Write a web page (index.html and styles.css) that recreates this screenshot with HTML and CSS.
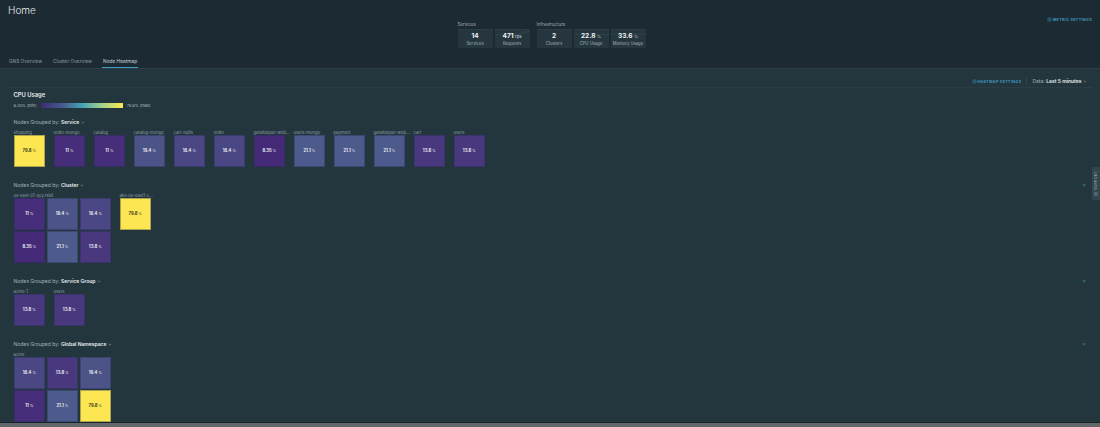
FILE: index.html
```html
<!DOCTYPE html>
<html lang="en">
<head>
    <meta charset="UTF-8">
    <title>Home</title>
    <link rel="stylesheet" href="styles.css">
</head>
<body>
    <header class="top">
        <h1 class="page-title">Home</h1>
        <div class="summary">
            <div class="summary-group">
                <div class="summary-label">Services</div>
                <div class="summary-cards">
                    <div class="stat"><b>14</b><span>Services</span></div>
                    <div class="stat"><svg class="spark" viewBox="0 0 35 19"><path d="M0 6l5-2 5 3 6-3 5 1 6-2 8-2"/></svg><b>471 <i>rps</i></b><span>Requests</span></div>
                </div>
            </div>
            <div class="summary-group">
                <div class="summary-label">Infrastructure</div>
                <div class="summary-cards">
                    <div class="stat"><b>2</b><span>Clusters</span></div>
                    <div class="stat"><svg class="spark" viewBox="0 0 35 19"><path d="M0 5l6-1 5 2 6-3 6 2 6-1 6 1"/></svg><b>22.8 <i>%</i></b><span>CPU Usage</span></div>
                    <div class="stat"><svg class="spark" viewBox="0 0 35 19"><path d="M0 4l8 0 6 1 7-1 7 0 7 0"/></svg><b>33.6 <i>%</i></b><span>Memory Usage</span></div>
                </div>
            </div>
        </div>
        <a class="settings-link metric-link"><svg class="gear" viewBox="0 0 10 10"><circle cx="5" cy="5" r="3.6"/><circle cx="5" cy="5" r="1.2"/></svg>METRIC SETTINGS</a>
    </header>
    <nav class="tabs">
        <a>GNS Overview</a>
        <a>Cluster Overview</a>
        <a class="active">Node Heatmap</a>
    </nav>
    <main class="content">
        <div class="toolbar">
            <a class="settings-link"><svg class="gear" viewBox="0 0 10 10"><circle cx="5" cy="5" r="3.6"/><circle cx="5" cy="5" r="1.2"/></svg>HEATMAP SETTINGS</a>
            <span class="toolbar-sep"></span>
            <span class="data-range">Data: <b>Last 5 minutes</b><svg class="caret" viewBox="0 0 6 4"><path d="M1 1l2 2 2-2"/></svg></span>
        </div>
        <h2 class="metric-title">CPU Usage</h2>
        <div class="legend">
            <span>8.35% (min)</span>
            <span class="legend-bar"></span>
            <span>79.8% (max)</span>
        </div>

        <section class="group group-service">
            <div class="group-title">Nodes Grouped by: <b>Service</b><svg class="caret" viewBox="0 0 6 4"><path d="M1 1l2 2 2-2"/></svg></div>
            <div class="blocks">
                <div class="block"><label>shopping</label><div class="cells one"><div class="cell c798">79.8 <i>%</i></div></div></div>
                <div class="block"><label>order-mongo</label><div class="cells one"><div class="cell c11">11 <i>%</i></div></div></div>
                <div class="block"><label>catalog</label><div class="cells one"><div class="cell c11">11 <i>%</i></div></div></div>
                <div class="block"><label>catalog-mongo</label><div class="cells one"><div class="cell c194">19.4 <i>%</i></div></div></div>
                <div class="block"><label>cart-redis</label><div class="cells one"><div class="cell c164">16.4 <i>%</i></div></div></div>
                <div class="block"><label>order</label><div class="cells one"><div class="cell c164">16.4 <i>%</i></div></div></div>
                <div class="block"><label>gatekeeper-web...</label><div class="cells one"><div class="cell c835">8.35 <i>%</i></div></div></div>
                <div class="block"><label>users-mongo</label><div class="cells one"><div class="cell c211">21.1 <i>%</i></div></div></div>
                <div class="block"><label>payment</label><div class="cells one"><div class="cell c211">21.1 <i>%</i></div></div></div>
                <div class="block"><label>gatekeeper-web...</label><div class="cells one"><div class="cell c211">21.1 <i>%</i></div></div></div>
                <div class="block"><label>cart</label><div class="cells one"><div class="cell c138">13.8 <i>%</i></div></div></div>
                <div class="block"><label>users</label><div class="cells one"><div class="cell c138">13.8 <i>%</i></div></div></div>
            </div>
        </section>

        <section class="group">
            <button class="close">×</button>
            <div class="group-title">Nodes Grouped by: <b>Cluster</b><svg class="caret" viewBox="0 0 6 4"><path d="M1 1l2 2 2-2"/></svg></div>
            <div class="blocks">
                <div class="block wide">
                    <label>us-east-01-qcy.tsbil</label>
                    <div class="cells three">
                        <div class="cell c11">11 <i>%</i></div>
                        <div class="cell c194">19.4 <i>%</i></div>
                        <div class="cell c164">16.4 <i>%</i></div>
                        <div class="cell c835">8.35 <i>%</i></div>
                        <div class="cell c211">21.1 <i>%</i></div>
                        <div class="cell c138">13.8 <i>%</i></div>
                    </div>
                </div>
                <div class="block"><label>aks-us-east1-c...</label><div class="cells one"><div class="cell c798">79.8 <i>%</i></div></div></div>
            </div>
        </section>

        <section class="group">
            <button class="close">×</button>
            <div class="group-title">Nodes Grouped by: <b>Service Group</b><svg class="caret" viewBox="0 0 6 4"><path d="M1 1l2 2 2-2"/></svg></div>
            <div class="blocks">
                <div class="block"><label>acme-1</label><div class="cells one"><div class="cell c138">13.8 <i>%</i></div></div></div>
                <div class="block"><label>users</label><div class="cells one"><div class="cell c138">13.8 <i>%</i></div></div></div>
            </div>
        </section>

        <section class="group">
            <button class="close">×</button>
            <div class="group-title">Nodes Grouped by: <b>Global Namespace</b><svg class="caret" viewBox="0 0 6 4"><path d="M1 1l2 2 2-2"/></svg></div>
            <div class="blocks">
                <div class="block wide">
                    <label>acme</label>
                    <div class="cells three">
                        <div class="cell c164">16.4 <i>%</i></div>
                        <div class="cell c138">13.8 <i>%</i></div>
                        <div class="cell c194">19.4 <i>%</i></div>
                        <div class="cell c11">11 <i>%</i></div>
                        <div class="cell c211">21.1 <i>%</i></div>
                        <div class="cell c798">79.8 <i>%</i></div>
                    </div>
                </div>
            </div>
        </section>
        <div class="support"><span>SUPPORT</span><svg class="support-icon" viewBox="0 0 6 6"><circle cx="3" cy="3" r="2.2"/></svg></div>
    </main>
    <div class="bottom-strip"></div>
</body>
</html>
```

FILE: styles.css
```css
* {
    box-sizing: border-box;
}

body {
    margin: 0;
    height: 427px;
    overflow: hidden;
    background-color: #1c2a33;
    font-family: Inter, "Liberation Sans", sans-serif;
    color: #c5ced3;
    display: flex;
    flex-direction: column;
}

/* Header */
.top {
    position: relative;
    height: 54px;
    flex: none;
    padding: 4px 5px 0 8px;
}

.page-title {
    margin: 0;
    font-size: 10px;
    font-weight: 300;
    line-height: 13px;
    color: #e6ecef;
}

.summary {
    display: flex;
    justify-content: center;
    gap: 7px;
    margin-top: 5px;
}

.summary-label {
    font-size: 4.5px;
    line-height: 6px;
    color: #a3b0b7;
    margin-bottom: 1px;
}

.summary-cards {
    display: flex;
    gap: 2px;
}

.stat {
    position: relative;
    width: 35px;
    height: 19px;
    background-color: #25363f;
    border-top: 1px solid #2b3e47;
    text-align: center;
    display: flex;
    flex-direction: column;
    align-items: center;
    padding-top: 2px;
}

.spark {
    position: absolute;
    top: 0;
    left: 0;
    width: 35px;
    height: 19px;
    fill: none;
    stroke: #3a505a;
    stroke-width: 0.5;
}

.stat b {
    position: relative;
    font-size: 6.5px;
    line-height: 9px;
    color: #eef2f4;
}

.stat i {
    font-size: 4px;
    font-style: normal;
    color: #a3b0b7;
}

.stat span {
    position: relative;
    font-size: 4.2px;
    line-height: 6px;
    white-space: nowrap;
    color: #a3b0b7;
}

.settings-link {
    display: flex;
    align-items: center;
    font-size: 3.8px;
    font-weight: 700;
    letter-spacing: 0.3px;
    color: #3f95b8;
}

.metric-link {
    position: absolute;
    top: 17px;
    right: 8px;
}

.gear {
    width: 5px;
    height: 5px;
    margin-right: 1px;
    fill: none;
    stroke: #3f95b8;
    stroke-width: 1;
}

/* Tabs */
.tabs {
    height: 14px;
    flex: none;
    display: flex;
    gap: 9px;
    padding-left: 8px;
    font-size: 4.8px;
    line-height: 15px;
    color: #8d9ca4;
}

.tabs a {
    padding: 0 1px;
}

.tabs .active {
    color: #c9d3d8;
    border-bottom: 1px solid #3f9fc4;
}

/* Content */
.content {
    position: relative;
    height: 355px;
    flex: none;
    background-color: #23363d;
    border-top: 1px solid #2d3e47;
    border-bottom: 1px solid #16242a;
    padding: 0 8px 0 13.5px;
}

.bottom-strip {
    flex: 1;
    background-color: #62676a;
}

.toolbar {
    display: flex;
    justify-content: flex-end;
    align-items: center;
    height: 19px;
    margin-left: -5.5px;
    padding: 6px 5px 0 0;
    border-bottom: 1px solid #2c3d45;
}

.toolbar-sep {
    width: 1px;
    height: 7px;
    background-color: #34464f;
    margin: 0 5px;
}

.data-range {
    font-size: 5px;
    color: #a3b0b7;
    display: flex;
    align-items: center;
    gap: 1.5px;
}

.data-range b {
    color: #e6ecef;
    font-weight: 600;
}

.caret {
    width: 4px;
    height: 3px;
    fill: none;
    stroke: #9aa8af;
    stroke-width: 0.8;
}

.metric-title {
    margin: 3px 0 0;
    font-size: 5.8px;
    line-height: 8px;
    font-weight: 600;
    color: #e6ecef;
}

.legend {
    display: flex;
    align-items: center;
    gap: 4px;
    margin-top: 3.5px;
    font-size: 4px;
    line-height: 5px;
    color: #b4bfc5;
}

.legend-bar {
    width: 82px;
    height: 5px;
    background: linear-gradient(to right, #3f2a78, #46578c 25%, #45a3b5 50%, #a5d48a 75%, #fde84f);
}

.group {
    position: relative;
    margin-top: 15px;
}

.group-service {
    margin-top: 11px;
}

.group-title {
    display: flex;
    align-items: center;
    gap: 1.5px;
    font-size: 5px;
    line-height: 7px;
    color: #a3b0b7;
}

.group-title b {
    color: #e6ecef;
    font-weight: 600;
}

.close {
    position: absolute;
    top: 0;
    right: 6px;
    padding: 0;
    border: none;
    background: none;
    font-size: 6px;
    line-height: 7px;
    color: #3f7f9e;
}

.blocks {
    display: flex;
    gap: 8.5px;
    margin-top: 4.5px;
}

.block {
    width: 31.5px;
}

.block.wide {
    width: 97.5px;
}

.block label {
    display: block;
    font-size: 4.2px;
    line-height: 5px;
    color: #8d9ca4;
    white-space: nowrap;
}

.cells {
    display: grid;
    gap: 1.5px;
    grid-auto-rows: 31.5px;
}

.cells.one { grid-template-columns: 31.5px; }
.cells.three { grid-template-columns: repeat(3, 31.5px); }

.cell {
    display: flex;
    align-items: center;
    justify-content: center;
    gap: 1px;
    font-size: 4.2px;
    font-weight: 700;
    color: #e8ecf0;
    border: 1px solid rgba(30, 40, 70, 0.35);
}

.cell i {
    font-size: 3.4px;
    font-style: normal;
    font-weight: 400;
}

.c798 { background-color: #fce652; color: #3a3a20; }
.c835 { background-color: #452a78; }
.c11 { background-color: #472e7a; }
.c138 { background-color: #4a387e; }
.c164 { background-color: #4b4684; }
.c194 { background-color: #4c5387; }
.c211 { background-color: #4d5a8c; }

.support {
    position: absolute;
    top: 98px;
    right: 0;
    width: 8px;
    height: 33px;
    background-color: #33464f;
    border-radius: 2px 0 0 2px;
    display: flex;
    flex-direction: column;
    align-items: center;
    justify-content: center;
    gap: 1.5px;
}

.support span {
    writing-mode: vertical-rl;
    transform: rotate(180deg);
    font-size: 3.6px;
    letter-spacing: 0.3px;
    color: #a3b0b7;
}

.support-icon {
    width: 4px;
    height: 4px;
    fill: none;
    stroke: #a3b0b7;
    stroke-width: 0.8;
}
```
